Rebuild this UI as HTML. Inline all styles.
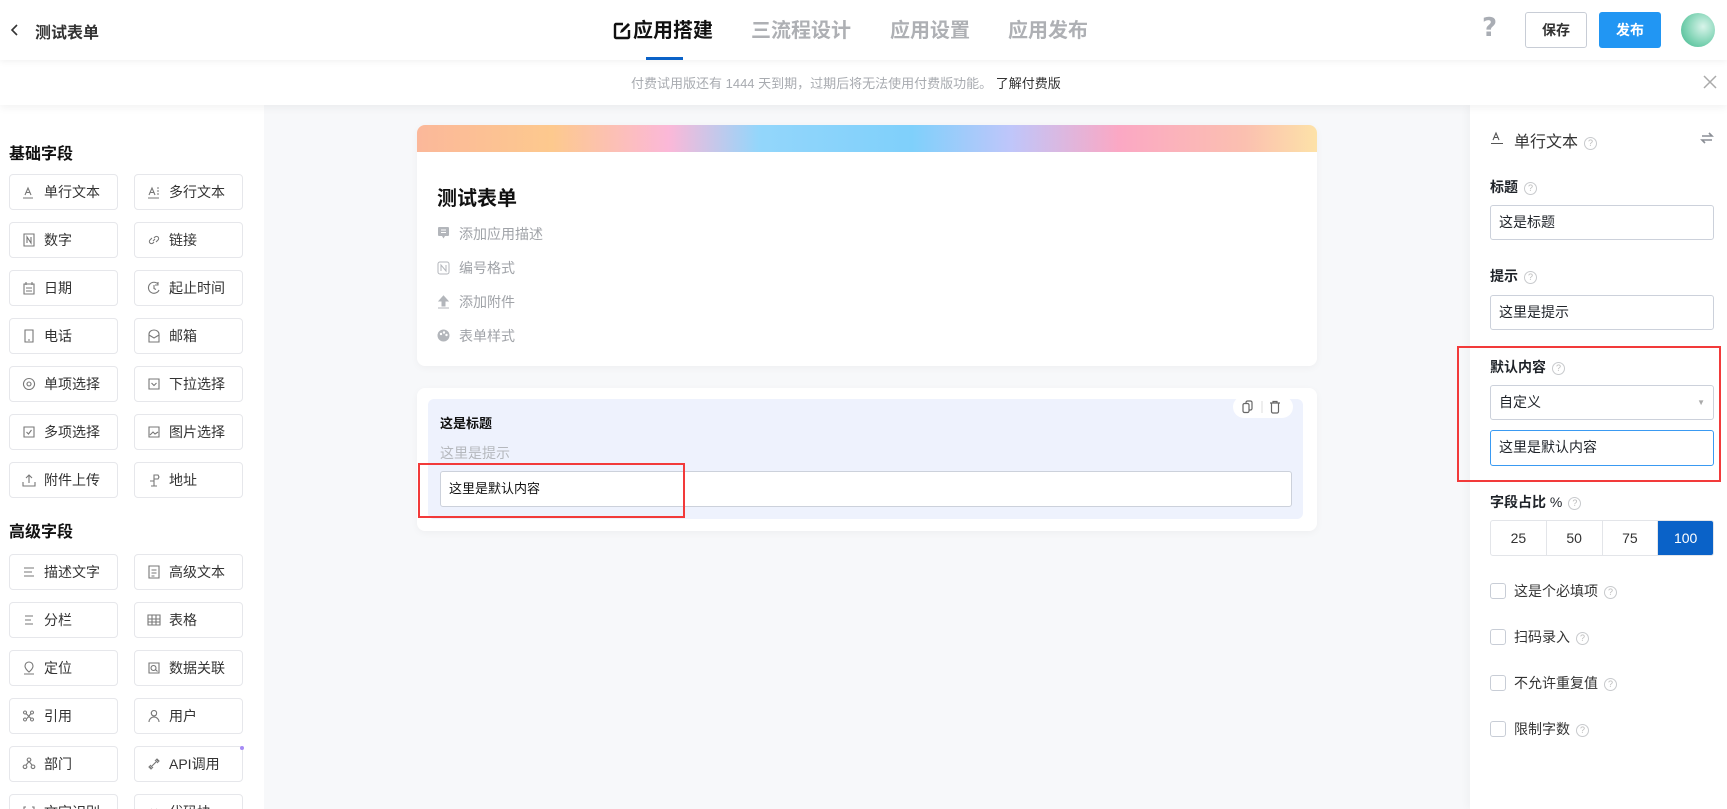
<!DOCTYPE html>
<html style="width:1727px;height:809px;overflow:hidden"><head><meta charset="utf-8"><style>
*{box-sizing:border-box;margin:0;padding:0}
body{width:1727px;height:809px;overflow:hidden;background:#f7f8fa;font-family:"Liberation Sans","Noto Sans CJK SC",sans-serif;color:#1f2329;position:relative}
.a{position:absolute}
.hdr{left:0;top:0;width:1727px;height:60px;background:#fff;box-shadow:0 2px 6px rgba(0,0,0,.05);z-index:3}
.tab{top:16px;font-size:20px;font-weight:bold;color:#aeb0b4;line-height:30px}
.notice{left:0;top:60px;width:1727px;height:45px;background:#fff;z-index:2;box-shadow:0 3px 8px rgba(0,0,0,.05)}
.left{left:0;top:105px;width:264px;height:704px;background:#fff}
.sec{font-size:16px;font-weight:bold;color:#111;left:9px}
.it{width:109px;height:36px;border:1px solid #e6e7eb;border-radius:4px;background:#fff;font-size:14px;color:#333;line-height:34px;padding-left:34px}
.it svg{position:absolute;left:12px;top:10px}
.right{left:1470px;top:105px;width:257px;height:704px;background:#fff;box-shadow:-3px 0 8px rgba(0,0,0,.03)}
.lbl{font-size:14px;font-weight:bold;color:#1f2329;left:1490px}
.q{display:inline-block;width:13px;height:13px;border:1px solid #c8cacd;border-radius:50%;font-size:9px;color:#bbb;text-align:center;line-height:11px;font-weight:normal;vertical-align:1px;margin-left:6px}
.inp{left:1490px;width:224px;height:35px;border:1px solid #ccd1db;border-radius:3px;font-size:14px;line-height:33px;padding-left:8px;color:#1f2329;background:#fff}
.cb{left:1490px;width:16px;height:16px;border:1px solid #c8cdd6;border-radius:3px;background:#fff}
.cbt{left:1514px;font-size:14px;color:#333}
.card{background:#fff;border-radius:8px;box-shadow:0 2px 8px rgba(0,0,0,.04)}
.sub{left:459px;font-size:14px;color:#a0a3a8}
</style></head><body>
<div class="a hdr">
  <svg class="a" style="left:10px;top:23px" width="10" height="14"><path d="M7 2L2 7l5 5" stroke="#333" stroke-width="1.6" fill="none"/></svg>
  <div class="a" style="left:35px;top:19px;font-size:16px;color:#333;font-weight:bold">测试表单</div>
  <svg class="a" style="left:612px;top:21px" width="20" height="20"><path d="M11 3H4a1 1 0 0 0-1 1v12a1 1 0 0 0 1 1h12a1 1 0 0 0 1-1V9" stroke="#111" stroke-width="2.4" fill="none"/><path d="M8 12l1-3 7-7 2 2-7 7z" fill="#111"/></svg>
  <div class="a tab" style="left:633px;color:#111">应用搭建</div>
  <div class="a tab" style="left:751px">三流程设计</div>
  <div class="a tab" style="left:890px">应用设置</div>
  <div class="a tab" style="left:1008px">应用发布</div>
  <div class="a" style="left:646px;top:57px;width:37px;height:3px;background:#0a62c8"></div>
  <div class="a" style="left:1482px;top:13px;font-size:26px;font-weight:900;color:#a9adb4;font-family:'DejaVu Sans',sans-serif">?</div>
  <div class="a" style="left:1525px;top:12px;width:62px;height:36px;border:1px solid #c8cdd6;border-radius:3px;font-size:14px;font-weight:bold;color:#333;text-align:center;line-height:34px">保存</div>
  <div class="a" style="left:1599px;top:12px;width:62px;height:36px;background:#2196f3;border-radius:3px;font-size:14px;font-weight:bold;color:#fff;text-align:center;line-height:36px">发布</div>
  <div class="a" style="left:1681px;top:13px;width:34px;height:34px;border-radius:50%;background:radial-gradient(circle at 65% 40%,#d8f4ea,#7fd3b4 55%,#3fb58c)"></div>
</div>
<div class="a notice">
  <div class="a" style="left:631px;top:13px;font-size:13px;color:#a8abb0">付费试用版还有 1444 天到期，过期后将无法使用付费版功能。 <span style="color:#333">了解付费版</span></div>
  <svg class="a" style="left:1703px;top:15px" width="14" height="14"><path d="M1 1l12 12M13 1L1 13" stroke="#aaa" stroke-width="1.5"/></svg>
</div>
<div class="a left">
  <div class="a sec" style="top:35px">基础字段</div>
  <div class="a sec" style="top:413px">高级字段</div>
</div>
<div id="items"></div>
<div class="a card" style="left:417px;top:125px;width:900px;height:241px;overflow:hidden">
  <div style="height:27px;background:linear-gradient(90deg,#fbb89a 0%,#fdc98e 15%,#fbb8d8 28%,#93d6fb 38%,#7fd0fb 55%,#bfc6fa 66%,#fba8c4 78%,#fbc0b0 92%,#fde2a8 100%)"></div>
</div>
<div class="a" style="left:437px;top:182px;font-size:20px;font-weight:bold;color:#111">测试表单</div>
<svg class="a" style="left:437px;top:226px" width="13" height="14"><path d="M2 1h9a1 1 0 0 1 1 1v7a1 1 0 0 1-1 1H8l-1.5 2.5L5 10H2a1 1 0 0 1-1-1V2a1 1 0 0 1 1-1z" fill="#b3b6bb"/><path d="M4 4h5M4 6.5h5" stroke="#fff"/></svg>
<div class="a sub" style="top:224px">添加应用描述</div>
<svg class="a" style="left:437px;top:261px" width="13" height="14"><rect x="1" y="1" width="11" height="12" rx="2" stroke="#b3b6bb" fill="none"/><path d="M4 10V4l5 6V4" stroke="#b3b6bb" fill="none"/></svg>
<div class="a sub" style="top:258px">编号格式</div>
<svg class="a" style="left:437px;top:295px" width="13" height="14"><path d="M6.5 1L2 6h3v5h3V6h3zM1 13h11" stroke="#b3b6bb" fill="#b3b6bb"/></svg>
<div class="a sub" style="top:292px">添加附件</div>
<svg class="a" style="left:437px;top:329px" width="13" height="13"><circle cx="6.5" cy="6.5" r="6" fill="#b3b6bb"/><circle cx="4" cy="5" r="1.2" fill="#fff"/><circle cx="7" cy="3.5" r="1.2" fill="#fff"/><circle cx="9.5" cy="6" r="1.2" fill="#fff"/></svg>
<div class="a sub" style="top:326px">表单样式</div>
<div class="a card" style="left:417px;top:388px;width:900px;height:143px"></div>
<div class="a" style="left:428px;top:399px;width:875px;height:120px;background:#eef2fd;border-radius:6px"></div>
<div class="a" style="left:1233px;top:396px;width:60px;height:22px;background:#fff;border-radius:11px"></div>
<svg class="a" style="left:1241px;top:400px" width="46" height="14"><rect x="5" y="1" width="6" height="9" rx="1.5" stroke="#666" fill="none" stroke-width="1.2"/><rect x="2" y="3.5" width="6" height="9" rx="1.5" stroke="#666" fill="#fff" stroke-width="1.2"/><path d="M21 1v12" stroke="#ddd"/><path d="M29 3h10M32 3V1.5h4V3M30.5 3.5v8a1.5 1.5 0 0 0 1.5 1.5h4a1.5 1.5 0 0 0 1.5-1.5v-8" stroke="#666" fill="none" stroke-width="1.2"/></svg>
<div class="a" style="left:440px;top:413px;font-size:13px;font-weight:bold;color:#111">这是标题</div>
<div class="a" style="left:440px;top:443px;font-size:14px;color:#b5b8bd">这里是提示</div>
<div class="a" style="left:440px;top:471px;width:852px;height:36px;background:#fff;border:1px solid #ccd1db;border-radius:3px;font-size:13px;line-height:34px;padding-left:8px;color:#111">这里是默认内容</div>
<div class="a" style="left:418px;top:463px;width:267px;height:55px;border:2px solid #f23a3a"></div>
<div class="a right"></div>
<svg class="a" style="left:1490px;top:131px" width="14" height="14"><path d="M3 9l3-7 3 7M4.2 6.5h3.6M1 12.5h12" stroke="#555" fill="none" stroke-width="1.1"/></svg>
<div class="a" style="left:1514px;top:128px;font-size:16px;color:#333">单行文本<span class="q">?</span></div>
<svg class="a" style="left:1700px;top:131px" width="14" height="14"><path d="M2 5h10L9 2M12 9H2l3 3" stroke="#8a8e95" fill="none" stroke-width="1.6"/></svg>
<div class="a lbl" style="top:177px">标题<span class="q">?</span></div>
<div class="a inp" style="top:205px">这是标题</div>
<div class="a lbl" style="top:266px">提示<span class="q">?</span></div>
<div class="a inp" style="top:295px">这里是提示</div>
<div class="a lbl" style="top:357px">默认内容<span class="q">?</span></div>
<div class="a inp" style="top:385px">自定义<span style="position:absolute;right:8px;top:0;font-size:8px;color:#aaa">▼</span></div>
<div class="a inp" style="top:430px;height:36px;border-color:#3a9af2">这里是默认内容</div>
<div class="a" style="left:1457px;top:346px;width:264px;height:136px;border:2px solid #f23a3a"></div>
<div class="a lbl" style="top:492px">字段占比 <span style="font-weight:normal">%</span><span class="q">?</span></div>
<div class="a" style="left:1490px;top:520px;width:224px;height:36px;border:1px solid #e3e5e9;border-radius:3px;display:flex;font-size:14px;color:#333;line-height:34px;text-align:center;overflow:hidden">
<div style="flex:1;border-right:1px solid #e3e5e9">25</div><div style="flex:1;border-right:1px solid #e3e5e9">50</div><div style="flex:1;border-right:1px solid #e3e5e9">75</div><div style="flex:1;background:#0a62c8;color:#fff">100</div></div>
<div class="a cb" style="top:583px"></div><div class="a cbt" style="top:581px">这是个必填项<span class="q">?</span></div>
<div class="a cb" style="top:629px"></div><div class="a cbt" style="top:627px">扫码录入<span class="q">?</span></div>
<div class="a cb" style="top:675px"></div><div class="a cbt" style="top:673px">不允许重复值<span class="q">?</span></div>
<div class="a cb" style="top:721px"></div><div class="a cbt" style="top:719px">限制字数<span class="q">?</span></div>
<div class="a" style="left:240px;top:746px;width:4px;height:4px;border-radius:50%;background:#a68bf5"></div>
<script>
var I=[["单行文本","M3 10l3-7 3 7M4.2 7.5h3.6M1 13h10"],["多行文本","M2 10l3-7 3 7M3.2 7.5h3.6M1 13h11M10 3h2M10 6h2M10 9h2"],["数字","M2 1h10v12H2zM5 10V4l4 6V4"],["链接","M6 8l2-2M5 5L3 7a2 2 0 0 0 3 3l1-1M9 9l2-2a2 2 0 0 0-3-3L7 5"],["日期","M2 3h10v10H2zM4 1v3M10 1v3M4 7h6M4 10h6"],["起止时间","M11 3A5.5 5.5 0 1 0 12 9M11 1v3H8M7 4v3.5l2 1"],["电话","M3 1h8v12H3zM6 11h2"],["邮箱","M2 5a5 4 0 0 1 10 0v8H2zM2 6l5 3 5-3"],["单项选择","M7 1.5a5.5 5.5 0 1 0 .01 0zM7 5a2 2 0 1 0 .01 0z"],["下拉选择","M2 2h10v10H2zM4.5 6L7 8.5 9.5 6"],["多项选择","M2 2h10v10H2zM4.5 7L6.5 9 9.5 5"],["图片选择","M2 2h10v10H2zM3 10l3-3 2 2 3-2M5 5h.1"],["附件上传","M7 10V2M4 5l3-3 3 3M1 9v4h12V9"],["地址","M7 13V2h4l1 2-1 2H7M3 8h4M4 13h6"]];
var J=[["描述文字","M2 3h10M2 7h8M2 11h10"],["高级文本","M2 1h10v12H2zM4.5 5h5M4.5 8h5M4.5 11h3"],["分栏","M3 3h8M3 7h6M3 11h8"],["表格","M1 2h12v10H1zM1 6h12M1 9h12M5 2v10M9 2v10"],["定位","M7 1a4 4 0 0 1 4 4c0 3-4 6-4 6S3 8 3 5a4 4 0 0 1 4-4zM2 13h10"],["数据关联","M2 2h10v10H2zM6.5 4.5a2.5 2.5 0 1 0 .01 0zM8.5 8.5l2 2"],["引用","M3 2a1.5 1.5 0 1 0 .01 0zM10 2a1.5 1.5 0 1 0 .01 0zM3 9a1.5 1.5 0 1 0 .01 0zM10 9a1.5 1.5 0 1 0 .01 0zM4 4.5l5 5M9 4.5l-4 5"],["用户","M7 1.5a2.7 2.7 0 1 0 .01 0zM2 13a5 5 0 0 1 10 0"],["部门","M7 1a1.8 1.8 0 1 0 .01 0zM3 8a1.8 1.8 0 1 0 .01 0zM11 8a1.8 1.8 0 1 0 .01 0zM7 4.5L4 8M7 4.5L10 8"],["API调用","M3 11l8-8M4 8l-2 2 2 2 2-2M10 6l2-2-2-2-2 2"],["文字识别","M2 4V2h2M10 2h2v2M12 10v2h-2M4 12H2v-2"],["代码块","M5 4L2 7l3 3M9 4l3 3-3 3"]];
var h="";function add(a,top){a.forEach(function(t,i){var x=i%2?134:9,y=top+Math.floor(i/2)*48;h+='<div class="a it" style="left:'+x+'px;top:'+y+'px"><svg width="14" height="14"><path d="'+t[1]+'" stroke="#777" fill="none" stroke-width="1.1"/></svg>'+t[0]+'</div>';});}
add(I,174);add(J,554);document.getElementById("items").innerHTML=h;
</script>
</body></html>
